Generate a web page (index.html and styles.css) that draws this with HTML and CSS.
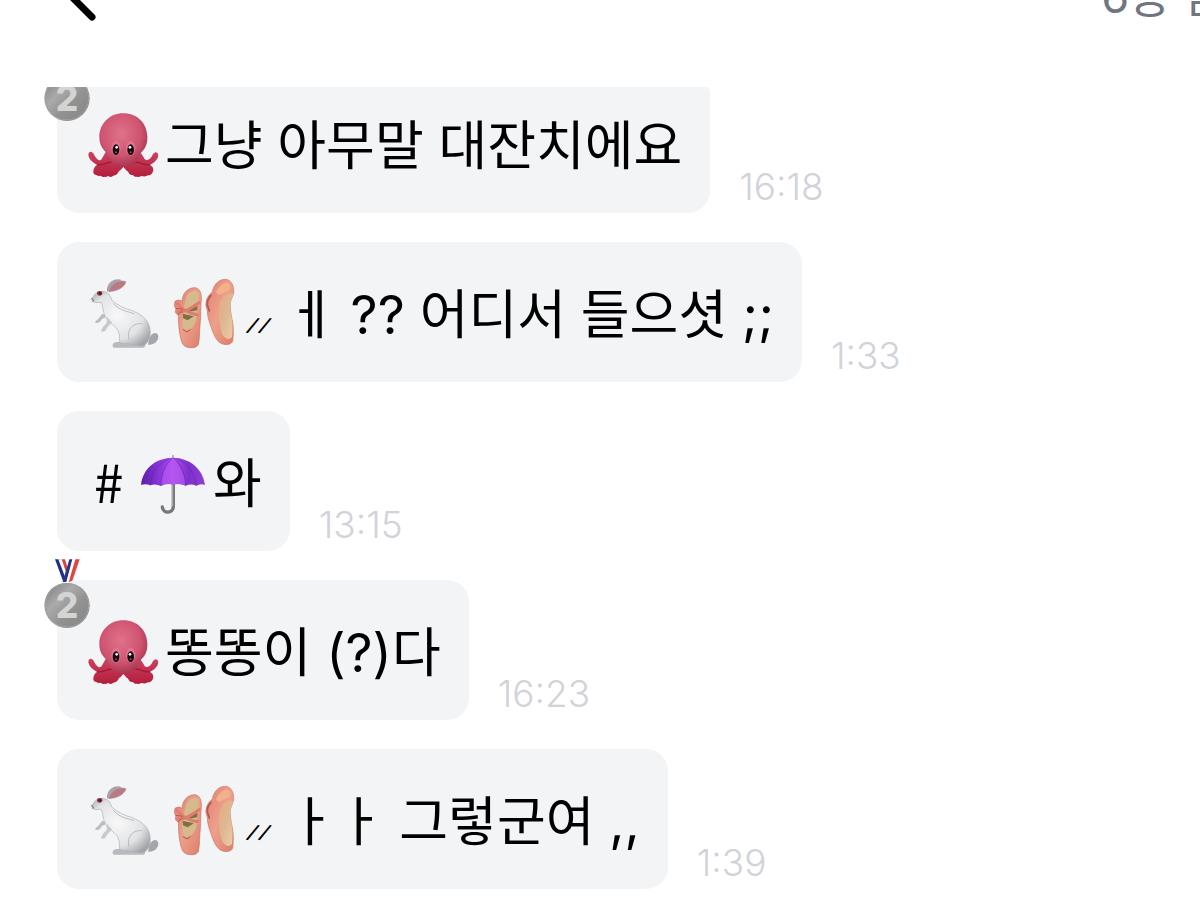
FILE: index.html
```
<!DOCTYPE html>
<html lang="ko">

<head>
    <meta charset="UTF-8">
    <meta name="viewport" content="width=device-width, initial-scale=1.0">
    <title>Chat</title>
    <link rel="stylesheet" href="styles.css">
</head>

<body>
    <!-- Shared emoji drawings -->
    <svg class="sprites" aria-hidden="true">
        <defs>
            <radialGradient id="head" cx=".45" cy=".38" r=".68">
                <stop offset="0" stop-color="#e0728b" />
                <stop offset=".6" stop-color="#cf5470" />
                <stop offset="1" stop-color="#9c2f49" />
            </radialGradient>
            <linearGradient id="arm" x1="0" y1="0" x2="0" y2="1">
                <stop offset="0" stop-color="#ce4663" />
                <stop offset="1" stop-color="#b21e3c" />
            </linearGradient>
            <radialGradient id="fur" cx=".45" cy=".45" r=".65">
                <stop offset="0" stop-color="#f8f8f9" />
                <stop offset=".65" stop-color="#e2e3e5" />
                <stop offset="1" stop-color="#a4a5aa" />
            </radialGradient>
            <linearGradient id="satin" x1="0" y1="0" x2="1" y2="1">
                <stop offset="0" stop-color="#e0806f" />
                <stop offset=".5" stop-color="#eda08a" />
                <stop offset="1" stop-color="#dc7c6c" />
            </linearGradient>
            <linearGradient id="insole" x1="0" y1="0" x2="1" y2="1">
                <stop offset="0" stop-color="#e9a883" />
                <stop offset=".5" stop-color="#ddb992" />
                <stop offset="1" stop-color="#f0cba8" />
            </linearGradient>
            <linearGradient id="canopy" x1="0" y1="0" x2="1" y2="0">
                <stop offset="0" stop-color="#5b1fa6" />
                <stop offset=".3" stop-color="#8a36db" />
                <stop offset=".5" stop-color="#aa4df0" />
                <stop offset=".75" stop-color="#7d30cb" />
                <stop offset="1" stop-color="#9140d5" />
            </linearGradient>
            <linearGradient id="silver" x1="0" y1="0" x2="1" y2="1">
                <stop offset="0" stop-color="#777" />
                <stop offset=".35" stop-color="#aaa" />
                <stop offset=".6" stop-color="#929292" />
                <stop offset="1" stop-color="#858585" />
            </linearGradient>
        </defs>

        <symbol id="octopus" viewBox="168 78 234 234">
            <path fill="url(#arm)" d="M218 232C211 251 197 235 191 221Q183 211 176 219C171 233 188 249 202 254Q190 261 190 276C189 286 203 284 205 289C213 284 216 294 223 290C230 293 232 286 239 290C246 293 250 286 255 286C266 283 263 274 271 271L280 261L290 272C297 274 295 284 305 285C311 283 313 293 321 290C328 293 333 286 339 289C345 292 350 286 355 286C367 286 374 270 367 260L360 254C377 248 389 231 383 220Q377 212 369 222C364 235 348 250 341 232L325 208H232Z" />
            <path fill="none" stroke="#a51835" stroke-width="4" stroke-linecap="round" d="M202 254C220 257 233 245 243 247M358 254C340 257 329 244 318 247" />
            <path fill="url(#head)" d="M280 100C238 100 208 132 208 171C208 196 219 209 232 220C237 246 254 258 280 260C307 258 324 246 329 221C344 209 353 194 352 170C351 130 322 100 280 100Z" />
            <ellipse cx="258" cy="205" rx="14" ry="22" fill="#e0768b" />
            <ellipse cx="302" cy="205" rx="14" ry="22" fill="#e0768b" />
            <ellipse cx="258" cy="209" rx="10" ry="16" fill="#180811" />
            <ellipse cx="302" cy="209" rx="10" ry="16" fill="#180811" />
            <circle cx="260" cy="202" r="4" fill="#fff" />
            <circle cx="300" cy="202" r="4" fill="#fff" />
            <circle cx="258" cy="217" r="3" fill="#795b62" />
            <circle cx="302" cy="217" r="3" fill="#795b62" />
        </symbol>

        <symbol id="rabbit" viewBox="108 105 234 234">
            <path fill="#bdbdc1" d="M157 221L145 236Q135 242 136 248Q147 253 156 237L172 229Z" />
            <path fill="#a5a6ab" d="M294 314Q315 316 324 297Q328 281 315 279Q304 280 298 294Z" />
            <path fill="#b9babf" d="M188 314Q190 305 205 306L282 310Q290 319 281 323H192Q186 321 188 314Z" />
            <path fill="url(#fur)" stroke="#b0b1b5" stroke-width="2" d="M171 158C154 150 140 155 133 165L124 178Q126 188 139 188L153 187C160 196 158 215 165 228C171 244 193 255 203 269Q211 282 208 305Q214 313 230 311C248 312 268 322 284 315C301 303 303 280 299 261C291 232 266 220 244 211C222 205 201 195 185 180Q182 163 171 158Z" />
            <path fill="#c8c9cd" d="M171 231L170 249Q157 260 153 273Q164 280 171 263L186 247Z" />
            <path fill="none" stroke="#bcbdc2" stroke-width="3" d="M237 300C229 266 250 248 277 251M190 190C209 213 237 215 252 221" />
            <path fill="#a9a2a8" d="M171 155Q169 128 193 119Q209 116 215 121L203 125Q184 132 184 151Z" />
            <path fill="#bd7983" stroke="#998c94" stroke-width="2" d="M177 155C186 129 207 119 227 125C226 139 206 151 183 154Z" />
            <ellipse cx="149" cy="160" rx="8" ry="7" fill="#8f3b43" />
            <circle cx="150" cy="160" r="4" fill="#471e24" />
            <path fill="none" stroke="#896f76" stroke-width="3" d="M124 175L131 180L128 185" />
        </symbol>

        <symbol id="shoes" viewBox="342 105 234 234">
            <path fill="url(#satin)" stroke="#c96f65" stroke-width="2" d="M396 184C397 160 413 143 434 143C449 144 456 160 454 181C451 209 453 222 451 245C448 266 450 291 445 314Q438 325 420 323Q399 322 394 302C388 280 384 249 386 225Q372 221 378 207Q370 198 375 184Q386 176 396 184Z" />
            <path fill="#d5ba8e" d="M407 178C411 158 426 151 439 154C450 160 446 180 443 196L440 231C438 252 427 268 411 270Q399 270 398 251L397 226Z" />
            <path fill="#7d7045" d="M414 207L443 198L441 211L418 215ZM398 221L431 229L413 241L399 235Z" />
            <path fill="none" stroke="#df7c6d" stroke-width="9" stroke-linecap="round" d="M382 191C397 210 417 221 443 224M383 216C406 219 426 202 447 188" />
            <path fill="none" stroke="#b35451" stroke-width="3" stroke-linecap="round" d="M378 205L397 208M384 224L396 214M399 269L411 276L421 269" />
            <path fill="url(#satin)" stroke="#cd7c6c" stroke-width="2" d="M487 155C492 130 510 116 530 118C549 125 552 143 551 160L542 184C538 202 543 221 547 242C552 266 550 285 548 305Q538 317 521 313C502 309 493 288 486 269C477 244 471 226 472 211Q464 196 470 178Q475 166 487 155Z" />
            <path fill="url(#insole)" d="M550 162C544 180 539 195 541 215C547 237 550 264 546 291Q536 302 524 292C511 283 509 255 507 228C505 203 510 182 522 168Q537 155 550 162Z" />
            <path fill="#f2b18a" d="M499 154Q513 128 532 127Q545 135 538 150L510 164Q498 165 499 154Z" />
            <path fill="none" stroke="#b85550" stroke-width="5" stroke-linecap="round" d="M483 166Q471 179 472 194L478 213" />
        </symbol>

        <symbol id="umbrella" viewBox="252 102 234 234">
            <path fill="none" stroke="#77767c" stroke-width="10" stroke-linecap="round" d="M370 218V289C370 312 339 312 337 291" />
            <path stroke="#b2b1b6" stroke-width="3" d="M368 221V288" />
            <path stroke="#aaa3b0" stroke-width="5" stroke-linecap="round" d="M369 137V151" />
            <path fill="url(#canopy)" d="M273 225C279 174 317 144 369 143C420 144 459 177 465 225Q452 219 439 227Q423 220 407 227Q388 219 369 224Q350 219 333 228Q316 220 301 226Q286 220 273 225Z" />
            <path fill="#c05ff6" opacity=".5" d="M365 145C344 164 333 194 333 227Q352 218 369 224Q388 218 407 227C405 194 391 162 369 145Z" />
            <path fill="none" stroke="#6424ad" stroke-width="3" opacity=".6" d="M358 146C324 160 303 190 301 226M367 145C343 165 334 194 333 227M372 145C394 166 406 193 407 227M381 146C415 160 434 190 439 227" />
        </symbol>

        <symbol id="medal" viewBox="40 24 144 216">
            <path fill="#202f86" d="M76 28H93L117 92L101 96Z" />
            <path fill="#fff" d="M86 28H99L115 79L110 91Z" />
            <path fill="#d94342" d="M96 28H106L117 65L113 78Z" />
            <path fill="#26358b" d="M119 28H129L111 96H99Z" />
            <path fill="#fff" d="M128 28H138L120 96H110Z" />
            <path fill="#df4541" d="M137 28H150L128 92L117 97Z" />
            <circle cx="112" cy="166" r="68" fill="url(#silver)" />
            <circle cx="112" cy="166" r="65" fill="none" stroke="#a1a1a1" stroke-width="3" />
            <text x="112" y="204" class="medal-number">2</text>
        </symbol>
    </svg>

    <header class="top-bar">
        <button class="back" type="button" aria-label="뒤로">
            <svg viewBox="0 0 40 72"><path d="M36 68L4 36L36 4" /></svg>
        </button>
        <span class="remaining"><span class="latin">6</span>종 남음</span>
    </header>

    <main class="chat">
        <ul class="messages">
            <li class="message">
                <div class="bubble">
                    <svg class="medal" role="img" aria-label="은메달"><use href="#medal" /></svg>
                    <svg class="emoji" role="img" aria-label="문어"><use href="#octopus" /></svg>
                    <span class="text">그냥 아무말 대잔치에요</span>
                </div>
                <time class="time">16:18</time>
            </li>
            <li class="message">
                <div class="bubble">
                    <svg class="emoji" role="img" aria-label="토끼"><use href="#rabbit" /></svg>
                    <svg class="emoji" role="img" aria-label="발레 슈즈"><use href="#shoes" /></svg>
                    <span class="blush"><i>/</i><i>/</i></span>
                    <span class="text">ㅔ <span class="latin">??</span> 어디서 들으셧 <span class="latin">;;</span></span>
                </div>
                <time class="time">1:33</time>
            </li>
            <li class="message">
                <div class="bubble">
                    <span class="text hash">#</span>
                    <svg class="emoji" role="img" aria-label="우산"><use href="#umbrella" /></svg>
                    <span class="text">와</span>
                </div>
                <time class="time">13:15</time>
            </li>
            <li class="message">
                <div class="bubble">
                    <svg class="medal" role="img" aria-label="은메달"><use href="#medal" /></svg>
                    <svg class="emoji" role="img" aria-label="문어"><use href="#octopus" /></svg>
                    <span class="text">똥똥이 <span class="latin">(?)</span>다</span>
                </div>
                <time class="time">16:23</time>
            </li>
            <li class="message">
                <div class="bubble">
                    <svg class="emoji" role="img" aria-label="토끼"><use href="#rabbit" /></svg>
                    <svg class="emoji" role="img" aria-label="발레 슈즈"><use href="#shoes" /></svg>
                    <span class="blush"><i>/</i><i>/</i></span>
                    <span class="text">ㅏㅏ 그렇군여 <span class="latin">,,</span></span>
                </div>
                <time class="time">1:39</time>
            </li>
        </ul>
    </main>
</body>

</html>
```
FILE: styles.css
```
* {
    box-sizing: border-box;
}

body {
    margin: 0;
    min-height: 100vh;
    background-color: #fff;
    color: #000;
    font-family: "Noto Sans CJK KR", sans-serif;
}

.sprites {
    position: absolute;
    width: 0;
    height: 0;
}

.top-bar {
    display: flex;
    justify-content: space-between;
    align-items: flex-end;
    height: 87px;
    padding: 0 0 66px 56px;
    overflow: hidden;
    white-space: nowrap;
}

.back {
    padding: 0;
    border: 0;
    background: none;
    cursor: pointer;
}

.back svg {
    display: block;
    width: 40px;
    height: 72px;
    fill: none;
    stroke: #000;
    stroke-width: 7px;
    stroke-linecap: round;
    stroke-linejoin: round;
}

.remaining {
    margin-right: -66px;
    padding-bottom: 2px;
    color: #6f7681;
    font-size: 45px;
    line-height: 48px;
}

.latin {
    font-family: Inter, sans-serif;
    line-height: 1;
}

.chat {
    overflow: hidden;
}

.messages {
    display: flex;
    flex-direction: column;
    gap: 29px;
    margin: -14px 0 0;
    padding: 0 0 27px 57px;
    list-style: none;
}

.message {
    display: flex;
    align-items: flex-end;
    gap: 29px;
}

.bubble {
    position: relative;
    display: flex;
    align-items: center;
    height: 140px;
    padding: 4px 28px 0 29px;
    border-radius: 22px;
    background-color: #f2f4f6;
    font-size: 53px;
    line-height: 80px;
    white-space: nowrap;
}

.text {
    padding-bottom: 6px;
}

.emoji {
    flex: none;
    width: 78px;
    height: 78px;
}

.emoji + .text {
    padding-left: 1px;
}

.medal {
    position: absolute;
    top: -22px;
    left: -14px;
    width: 48px;
    height: 72px;
}

.medal-number {
    fill: #d4d4d4;
    font-family: Inter, sans-serif;
    font-size: 106px;
    font-weight: 800;
    text-anchor: middle;
}

.blush {
    display: flex;
    gap: 5px;
    width: 45px;
    padding: 22px 0 0 7px;
    font-family: Inter, sans-serif;
    font-size: 20px;
    font-weight: 500;
    line-height: 24px;
}

.blush i {
    transform: rotate(16deg);
}

.hash {
    width: 48px;
    padding-left: 8px;
}

.time {
    padding-bottom: 4px;
    color: #d1d3d9;
    font-family: Inter, sans-serif;
    font-size: 37px;
    font-weight: 300;
    line-height: 44px;
}
```
